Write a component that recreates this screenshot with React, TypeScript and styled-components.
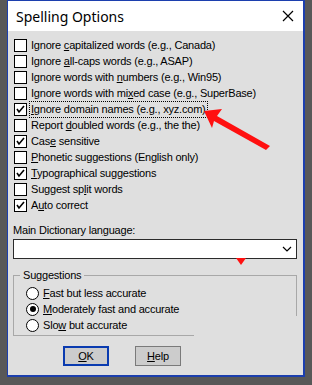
import React from 'react';
import styled, { createGlobalStyle } from 'styled-components';

const GlobalStyle = createGlobalStyle`
  html, body {
    margin: 0;
    padding: 0;
    background: #585858;
  }
`;

const Page = styled.div`
  position: relative;
  width: 312px;
  height: 385px;
  background: #585858;
  padding-left: 7px;
  box-sizing: border-box;
  overflow: hidden;
`;

const Dialog = styled.div`
  width: 298px;
  height: 377px;
  box-sizing: border-box;
  border: 1px solid #1c3fae;
  border-right-width: 2px;
  border-bottom-width: 2px;
  background: #dfdfdf;
  display: flex;
  flex-direction: column;
  font-family: 'Liberation Sans', Arial, sans-serif;
  font-size: 11px;
  letter-spacing: -0.2px;
  color: #000;
`;

const TitleBar = styled.div`
  height: 30px;
  background: #fff;
  display: flex;
  align-items: center;
  justify-content: space-between;
  padding: 0 9px 0 8px;
  flex-shrink: 0;
`;

const Title = styled.span`
  font-family: 'Noto Sans', 'Open Sans', sans-serif;
  font-size: 14px;
  letter-spacing: 0;
  color: #000;
`;

const CloseIcon = styled.svg`
  width: 12px;
  height: 12px;
`;

const Body = styled.div`
  padding: 6px 6px 0 6px;
  display: flex;
  flex-direction: column;
`;

const CheckList = styled.div`
  display: flex;
  flex-direction: column;
`;

const Row = styled.div`
  height: 16px;
  display: flex;
  align-items: center;
  gap: 3px;
`;

const Box = styled.span`
  width: 13px;
  height: 13px;
  box-sizing: border-box;
  border: 1px solid #000;
  background: #fff;
  display: inline-flex;
  align-items: center;
  justify-content: center;
  flex-shrink: 0;
`;

const RowText = styled.span<{ $focused?: boolean }>`
  padding: 1px 1px;
  line-height: 13px;
  white-space: nowrap;
  outline: ${(p) => (p.$focused ? '1px dotted #000' : 'none')};
`;

const Key = styled.u`
  text-decoration: underline;
  text-underline-offset: 1px;
`;

const FieldLabel = styled.div`
  margin: 10px 0 0 -1px;
  line-height: 14px;
`;

const Select = styled.div`
  margin: 2px 0 0 -1px;
  width: 284px;
  height: 20px;
  box-sizing: border-box;
  border: 1px solid #2b2b2b;
  background: #fff;
  display: flex;
  align-items: center;
  justify-content: flex-end;
  padding-right: 4px;
`;

const Group = styled.div`
  position: relative;
  margin: 16px 0 0 -1px;
  width: 284px;
  height: 60px;
  border-top: 1px solid #a8a8a8;
  border-left: 1px solid #a8a8a8;
  box-sizing: border-box;
  padding: 9px 0 0 12px;

  &::after {
    content: '';
    position: absolute;
    right: 0;
    top: 0;
    width: 1px;
    height: 40px;
    background: #a8a8a8;
  }

  &::before {
    content: '';
    position: absolute;
    left: -1px;
    bottom: -1px;
    width: 181px;
    height: 1px;
    background: #a8a8a8;
  }
`;

const Legend = styled.span`
  position: absolute;
  top: -8px;
  left: 6px;
  padding: 0 3px;
  background: #dfdfdf;
  line-height: 14px;
`;

const Radio = styled.span<{ $on?: boolean }>`
  width: 13px;
  height: 13px;
  box-sizing: border-box;
  border-radius: 50%;
  border: 1.5px solid #000;
  background: #fff;
  display: inline-flex;
  align-items: center;
  justify-content: center;
  flex-shrink: 0;

  &::after {
    content: '';
    width: 6px;
    height: 6px;
    border-radius: 50%;
    background: ${(p) => (p.$on ? '#000' : 'transparent')};
  }
`;

const Buttons = styled.div`
  display: flex;
  gap: 26px;
  margin: 11px 0 0 49px;
`;

const Button = styled.div<{ $default?: boolean }>`
  width: 46px;
  height: 20px;
  box-sizing: border-box;
  border: ${(p) => (p.$default ? '2px solid #0a3bb0' : '1px solid #7a7a7a')};
  background: #cccccc;
  display: flex;
  align-items: center;
  justify-content: center;
  font-size: 11px;
`;

const Annotation = styled.svg`
  position: absolute;
  left: 0;
  top: 0;
  width: 312px;
  height: 385px;
  pointer-events: none;
`;

const Check = () => (
  <svg width="11" height="11" viewBox="0 0 11 11">
    <polyline points="2,5 4,8 9,2" fill="none" stroke="#000" strokeWidth="1.6" />
  </svg>
);

type Opt = { pre: string; key: string; post: string; checked?: boolean; focused?: boolean };

const options: Opt[] = [
  { pre: 'Ignore ', key: 'c', post: 'apitalized words (e.g., Canada)' },
  { pre: 'Ignore ', key: 'a', post: 'll-caps words (e.g., ASAP)' },
  { pre: 'Ignore words with ', key: 'n', post: 'umbers (e.g., Win95)' },
  { pre: 'Ignore words with mi', key: 'x', post: 'ed case (e.g., SuperBase)' },
  { pre: '', key: 'I', post: 'gnore domain names (e.g., xyz.com)', checked: true, focused: true },
  { pre: 'Report ', key: 'd', post: 'oubled words (e.g., the the)' },
  { pre: 'Cas', key: 'e', post: ' sensitive', checked: true },
  { pre: '', key: 'P', post: 'honetic suggestions (English only)' },
  { pre: '', key: 'T', post: 'ypographical suggestions', checked: true },
  { pre: 'Suggest sp', key: 'l', post: 'it words' },
  { pre: 'A', key: 'u', post: 'to correct', checked: true },
];

const radios = [
  { key: 'F', post: 'ast but less accurate' },
  { key: 'M', post: 'oderately fast and accurate', on: true },
  { pre: 'Slo', key: 'w', post: ' but accurate' },
];

export default function App() {
  return (
    <Page>
      <GlobalStyle />
      <Dialog>
        <TitleBar>
          <Title>Spelling Options</Title>
          <CloseIcon viewBox="0 0 12 12">
            <path d="M1 1 L11 11 M11 1 L1 11" stroke="#000" strokeWidth="1.2" />
          </CloseIcon>
        </TitleBar>
        <Body>
          <CheckList>
            {options.map((o) => (
              <Row key={o.post}>
                <Box>{o.checked && <Check />}</Box>
                <RowText $focused={o.focused}>
                  {o.pre}
                  <Key>{o.key}</Key>
                  {o.post}
                </RowText>
              </Row>
            ))}
          </CheckList>
          <FieldLabel>
            Main Dictionary lan<Key>g</Key>uage:
          </FieldLabel>
          <Select>
            <svg width="10" height="6" viewBox="0 0 10 6">
              <polyline points="1,1 5,5 9,1" fill="none" stroke="#000" strokeWidth="1.2" />
            </svg>
          </Select>
          <Group>
            <Legend>Suggestions</Legend>
            {radios.map((r) => (
              <Row key={r.post}>
                <Radio $on={r.on} />
                <RowText>
                  {r.pre}
                  <Key>{r.key}</Key>
                  {r.post}
                </RowText>
              </Row>
            ))}
          </Group>
          <Buttons>
            <Button $default>
              <span>
                <Key>O</Key>K
              </span>
            </Button>
            <Button>
              <span>
                <Key>H</Key>elp
              </span>
            </Button>
          </Buttons>
        </Body>
      </Dialog>
      <Annotation viewBox="0 0 312 385">
        <polygon points="204,111 222,109 217,116 270,146 266,150 214,121 212,128" fill="#ff1010" />
        <polygon points="236,258 246,258 241,265" fill="#ff1010" />
      </Annotation>
    </Page>
  );
}
